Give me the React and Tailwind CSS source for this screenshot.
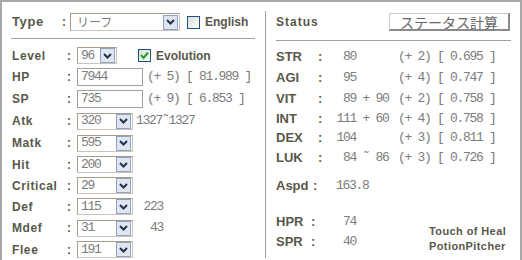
import React from 'react';

const LABEL = "font-['Liberation_Sans',sans-serif] font-bold text-[#58584a]";
const MONO = "font-['Liberation_Mono',monospace] text-[13px] tracking-[-1.3px] text-[#7c7c7c] whitespace-pre";

const Arrow = () => (
  <span className="mr-px flex h-[15px] w-[15px] shrink-0 items-center justify-center border border-[#8fa3c0] bg-[#dfe6f1]">
    <svg width="9" height="6" viewBox="0 0 9 6">
      <polyline points="1,1 4.5,4.5 8,1" fill="none" stroke="#24324a" strokeWidth="2" />
    </svg>
  </span>
);

const Select = ({ value, w, h = 'h-[17px]', jp }) => (
  <div className={`flex ${w} ${h} shrink-0 items-center border border-[#a69b8c] border-r-[#c9c3ba] border-b-[#c9c3ba] bg-white`}>
    <span
      className={
        jp
          ? "flex-1 pl-[6px] font-['Noto_Sans_CJK_JP',sans-serif] text-[12px] text-[#7a7a7a]"
          : `flex-1 pl-[3px] ${MONO}`
      }
    >
      {value}
    </span>
    <Arrow />
  </div>
);

const Checkbox = ({ checked }) => (
  <span className="flex h-[13px] w-[13px] shrink-0 items-center justify-center border border-[#1c5180] bg-linear-to-br from-[#dcdcd7] to-white">
    {checked && (
      <svg width="9" height="9" viewBox="0 0 9 9">
        <polyline points="1,4 3.5,7 8,1.5" fill="none" stroke="#21a121" strokeWidth="2" />
      </svg>
    )}
  </span>
);

const Row = ({ label, h, children }) => (
  <div className={`flex ${h} items-center`}>
    <span className={`${LABEL} w-[55px] text-[12px] tracking-[0.6px]`}>{label}</span>
    <span className={`${LABEL} w-[10px] text-[12px]`}>:</span>
    {children}
  </div>
);

const stats = [
  { k: 'STR', a: '80', b: '', bonus: '(+ 2) [ 0.695 ]', h: 'h-[20px]' },
  { k: 'AGI', a: '95', b: '', bonus: '(+ 4) [ 0.747 ]', h: 'h-[22px]' },
  { k: 'VIT', a: '89', b: ' + 90', bonus: '(+ 2) [ 0.758 ]', h: 'h-[20px]' },
  { k: 'INT', a: '111', b: ' + 60', bonus: '(+ 4) [ 0.758 ]', h: 'h-[19px]' },
  { k: 'DEX', a: '104', b: '', bonus: '(+ 3) [ 0.811 ]', h: 'h-[20px]' },
  { k: 'LUK', a: '84', b: ' ˜ 86', bonus: '(+ 3) [ 0.726 ]', h: 'h-[19px]' },
];

const selects = [
  { label: 'Atk', value: '320', extra: '1327˜1327', h: 'h-[22px]' },
  { label: 'Matk', value: '595', h: 'h-[22px]' },
  { label: 'Hit', value: '200', h: 'h-[21px]' },
  { label: 'Critical', value: '29', h: 'h-[21px]' },
  { label: 'Def', value: '115', right: '223', h: 'h-[21px]' },
  { label: 'Mdef', value: '31', right: '43', h: 'h-[22px]' },
  { label: 'Flee', value: '191', h: 'h-[21px]' },
];

export default function App() {
  return (
    <div className="flex h-[260px] w-[522px] overflow-hidden border-x-2 border-t-2 border-[#a8a8a8] bg-white">
      {/* left panel */}
      <div className="w-[263px] shrink-0 pt-[11px]">
        <div className="flex h-[18px] items-center pl-[10px]">
          <span className={`${LABEL} w-[50px] text-[13px] tracking-[0.6px]`}>Type</span>
          <span className={`${LABEL} w-[8px] text-[12px]`}>:</span>
          <Select value="リーフ" w="w-[110px]" h="h-[18px]" jp />
          <span className="ml-[7px]">
            <Checkbox />
          </span>
          <span className={`${LABEL} ml-[5px] text-[12px]`}>English</span>
        </div>
        <div className="ml-[9px] mt-[7px] h-px w-[244px] bg-[#a0a0a0]" />
        <div className="mt-[6px] pl-[10px]">
          <Row label="Level" h="h-[21px]">
            <Select value="96" w="w-[40px]" />
            <span className="ml-[21px]">
              <Checkbox checked />
            </span>
            <span className={`${LABEL} ml-[5px] text-[12px]`}>Evolution</span>
          </Row>
          <Row label="HP" h="h-[22px]">
            <div className={`flex h-[18px] w-[66px] items-center border border-[#a0a0a0] pl-[3px] ${MONO}`}>7944</div>
            <span className={`ml-[4px] ${MONO}`}>(+ 5) [ 81.989 ]</span>
          </Row>
          <Row label="SP" h="h-[22px]">
            <div className={`flex h-[18px] w-[66px] items-center border border-[#a0a0a0] pl-[3px] ${MONO}`}>735</div>
            <span className={`ml-[4px] ${MONO}`}>(+ 9) [ 6.853 ]</span>
          </Row>
          {selects.map((s) => (
            <Row key={s.label} label={s.label} h={s.h}>
              <Select value={s.value} w="w-[56px]" />
              {s.extra && <span className={`ml-[3px] ${MONO}`}>{s.extra}</span>}
              {s.right && <span className={`w-[30px] text-right ${MONO}`}>{s.right}</span>}
            </Row>
          ))}
        </div>
      </div>

      <div className="mb-[2px] mt-[9px] w-px shrink-0 bg-[#a0a0a0]" />

      {/* right panel */}
      <div className="flex-1 pl-[10px] pt-[11px]">
        <div className="flex h-[18px] w-[234px] items-center">
          <span className={`${LABEL} text-[12px] tracking-[1px]`}>Status</span>
          <button className="ml-auto flex h-[18px] w-[121px] items-center justify-center border-b-2 border-l border-r-2 border-t border-b-[#8a8a8a] border-l-[#c8c8c8] border-r-[#8a8a8a] border-t-[#c8c8c8] bg-white font-['Noto_Sans_CJK_JP',sans-serif] text-[14px] leading-none text-[#666]">
            ステータス計算
          </button>
        </div>
        <div className="mt-[9px] h-px w-[235px] bg-[#a0a0a0]" />
        <div className="mt-[6px]">
          {stats.map((s) => (
            <div key={s.k} className={`flex ${s.h} items-center`}>
              <span className={`${LABEL} w-[42px] text-[13px]`}>{s.k}</span>
              <span className={`${LABEL} w-[8px] text-[13px]`}>:</span>
              <span className={`w-[30px] text-right ${MONO}`}>{s.a}</span>
              <span className={`w-[42px] ${MONO}`}>{s.b}</span>
              <span className={MONO}>{s.bonus}</span>
            </div>
          ))}
        </div>
        <div className="mt-[9px] flex h-[20px] items-center">
          <span className={`${LABEL} w-[37px] text-[13px]`}>Aspd</span>
          <span className={`${LABEL} w-[23px] text-[13px]`}>:</span>
          <span className={MONO}>163.8</span>
        </div>
        <div className="mt-[16px] flex">
          <div className="w-[153px]">
            <div className="flex h-[20px] items-center">
              <span className={`${LABEL} w-[35px] text-[13px]`}>HPR</span>
              <span className={`${LABEL} w-[32px] text-[13px]`}>:</span>
              <span className={MONO}>74</span>
            </div>
            <div className="flex h-[19px] items-center">
              <span className={`${LABEL} w-[35px] text-[13px]`}>SPR</span>
              <span className={`${LABEL} w-[32px] text-[13px]`}>:</span>
              <span className={MONO}>40</span>
            </div>
          </div>
          <div className={`pt-[12px] ${LABEL} text-[11px] leading-[15px] tracking-[0.4px] text-[#4a4a3c]`}>
            <div>Touch of Heal</div>
            <div>PotionPitcher</div>
          </div>
        </div>
      </div>
    </div>
  );
}
